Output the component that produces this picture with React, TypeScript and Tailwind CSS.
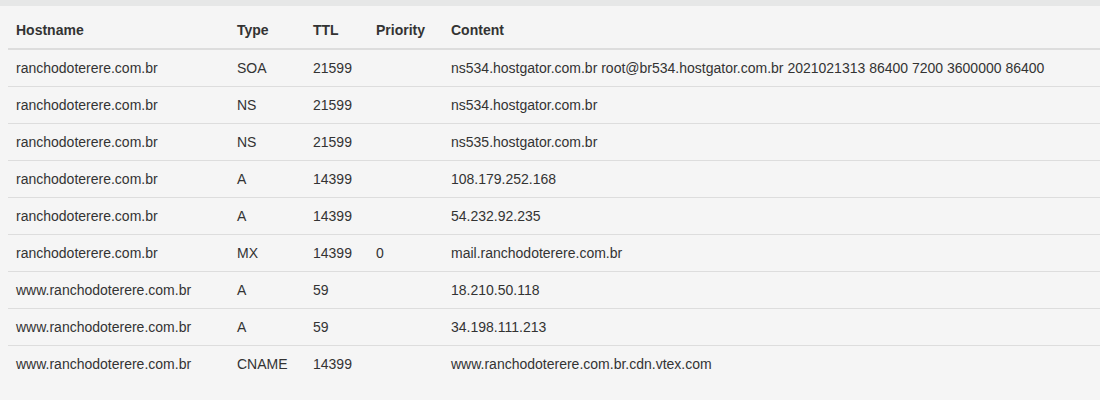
import React from "react";

const rows: [string, string, string, string, string][] = [
  ["ranchodoterere.com.br", "SOA", "21599", "", "ns534.hostgator.com.br root@br534.hostgator.com.br 2021021313 86400 7200 3600000 86400"],
  ["ranchodoterere.com.br", "NS", "21599", "", "ns534.hostgator.com.br"],
  ["ranchodoterere.com.br", "NS", "21599", "", "ns535.hostgator.com.br"],
  ["ranchodoterere.com.br", "A", "14399", "", "108.179.252.168"],
  ["ranchodoterere.com.br", "A", "14399", "", "54.232.92.235"],
  ["ranchodoterere.com.br", "MX", "14399", "0", "mail.ranchodoterere.com.br"],
  ["www.ranchodoterere.com.br", "A", "59", "", "18.210.50.118"],
  ["www.ranchodoterere.com.br", "A", "59", "", "34.198.111.213"],
  ["www.ranchodoterere.com.br", "CNAME", "14399", "", "www.ranchodoterere.com.br.cdn.vtex.com"],
];

export default function App() {
  return (
    <div
      className="w-[1100px] h-[400px] bg-[#f5f5f5] overflow-hidden text-[14px] leading-[20px] text-[#333]"
      style={{ fontFamily: '"Liberation Sans", Arial, sans-serif' }}
    >
      <div className="h-[6px] bg-[#e6e7e7]" />
      <div className="pt-[6px] pl-[8px]">
        <table className="w-[1100px] border-collapse text-left">
          <thead>
            <tr className="border-b-2 border-[#ddd]">
              <th className="w-[221px] p-[8px] font-bold">Hostname</th>
              <th className="w-[76px] p-[8px] font-bold">Type</th>
              <th className="w-[63px] p-[8px] font-bold">TTL</th>
              <th className="w-[75px] p-[8px] font-bold">Priority</th>
              <th className="p-[8px] font-bold">Content</th>
            </tr>
          </thead>
          <tbody>
            {rows.map((r, i) => (
              <tr key={i} className={i < rows.length - 1 ? "border-b border-[#ddd]" : ""}>
                {r.map((c, j) => (
                  <td key={j} className="p-[8px] whitespace-nowrap">
                    {c}
                  </td>
                ))}
              </tr>
            ))}
          </tbody>
        </table>
      </div>
    </div>
  );
}
